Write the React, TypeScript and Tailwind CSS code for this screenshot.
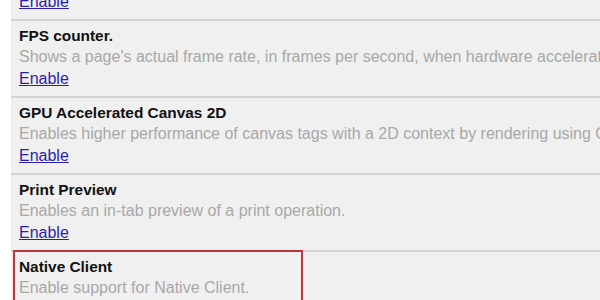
import React from 'react';

const experiments = [
  { title: 'Hidden', desc: 'Hidden', },
  { title: 'FPS counter.', desc: "Shows a page's actual frame rate, in frames per second, when hardware acceleration is active." },
  { title: 'GPU Accelerated Canvas 2D', desc: 'Enables higher performance of canvas tags with a 2D context by rendering using GPU hardware.' },
  { title: 'Print Preview', desc: 'Enables an in-tab preview of a print operation.' },
];

const ExperimentRow = ({ title, desc, highlight, noLink }: any) => (
  <div className="relative border-t-2 border-[#d4d4d4] pl-2 pt-1 pb-2 h-[77px] whitespace-nowrap overflow-visible">
    <div className="font-bold text-[15.4px] leading-[21px] text-[#111]">{title}</div>
    <div className="text-[16px] leading-[21px] text-[#a8a8a8]">{desc}</div>
    {!noLink && (
      <a href="#" className="text-[16px] leading-[21px] text-[#2a1fae] underline">Enable</a>
    )}
    {highlight && (
      <div className="absolute left-[2px] top-[-2px] w-[290px] h-[80px] border-2 border-[#c2343f]" />
    )}
  </div>
);

export default function App() {
  return (
    <div className="w-[600px] h-[300px] overflow-hidden bg-white" style={{ fontFamily: '"Liberation Sans", Arial, sans-serif' }}>
      <div className="ml-[11px] bg-[#f0f0f0] -mt-[58px] overflow-hidden">
        {experiments.map((e, i) => (
          <ExperimentRow key={i} title={e.title} desc={e.desc} />
        ))}
        <ExperimentRow title="Native Client" desc="Enable support for Native Client." highlight />
      </div>
    </div>
  );
}
